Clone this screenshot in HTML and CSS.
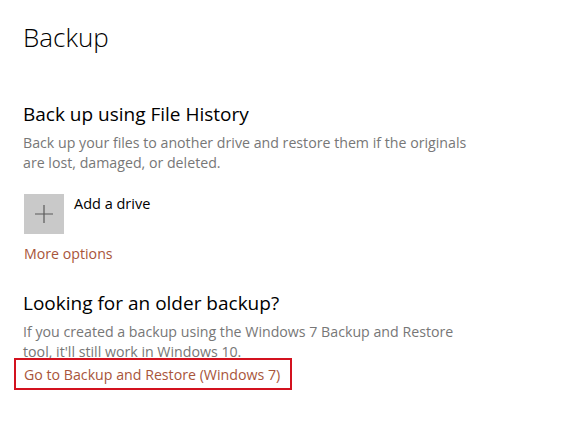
FILE: index.html
```html
<!DOCTYPE html>
<html>
<head>
<meta charset="utf-8">
<link rel="stylesheet" href="styles.css">
</head>
<body>
<main class="page">
  <h1 class="title">Backup</h1>
  <section class="section">
    <h2 class="heading">Back up using File History</h2>
    <p class="desc">Back up your files to another drive and restore them if the originals<br>are lost, damaged, or deleted.</p>
    <div class="add-drive">
      <div class="plus-tile">
        <svg width="18" height="18" viewBox="0 0 18 18"><path d="M9 0V18M0 9H18" stroke="#5a5a5a" stroke-width="1.2" fill="none"/></svg>
      </div>
      <span class="add-label">Add a drive</span>
    </div>
    <a class="link more" href="#">More options</a>
  </section>
  <section class="section older">
    <h2 class="heading">Looking for an older backup?</h2>
    <p class="desc">If you created a backup using the Windows 7 Backup and Restore<br>tool, it'll still work in Windows 10.</p>
    <div class="highlight"><a class="link" href="#">Go to Backup and Restore (Windows 7)</a></div>
  </section>
</main>
</body>
</html>
```
FILE: styles.css
```css
html, body { margin: 0; padding: 0; background: #fff; }
body { font-family: "Open Sans", "Noto Sans", sans-serif; color: #000; }
.page { padding: 18px 0 0 23px; }
.title { font-size: 26px; font-weight: 300; margin: 0; line-height: 38px; }
.section { margin-top: 44px; }
.heading { font-size: 19px; font-weight: 400; margin: 0; line-height: 28px; }
.desc { font-size: 14.2px; color: #777; margin: 5px 0 0; line-height: 20px; }
.add-drive { display: flex; align-items: flex-start; gap: 10px; margin-top: 21px; margin-left: 1px; }
.plus-tile { width: 40px; height: 40px; background: #c9c9c9; display: flex; align-items: center; justify-content: center; }
.add-label { font-size: 14.5px; line-height: 20px; margin-top: 0; }
.link { color: #a8553a; text-decoration: none; font-size: 14.2px; line-height: 20px; }
.more { display: inline-block; margin-top: 10px; margin-left: 1px; }
.older { margin-top: 25px; }
.highlight { display: inline-block; border: 2px solid #d3121f; margin-left: -9px; padding: 3px 10px 3px 8px; margin-top: -4px; }
```
